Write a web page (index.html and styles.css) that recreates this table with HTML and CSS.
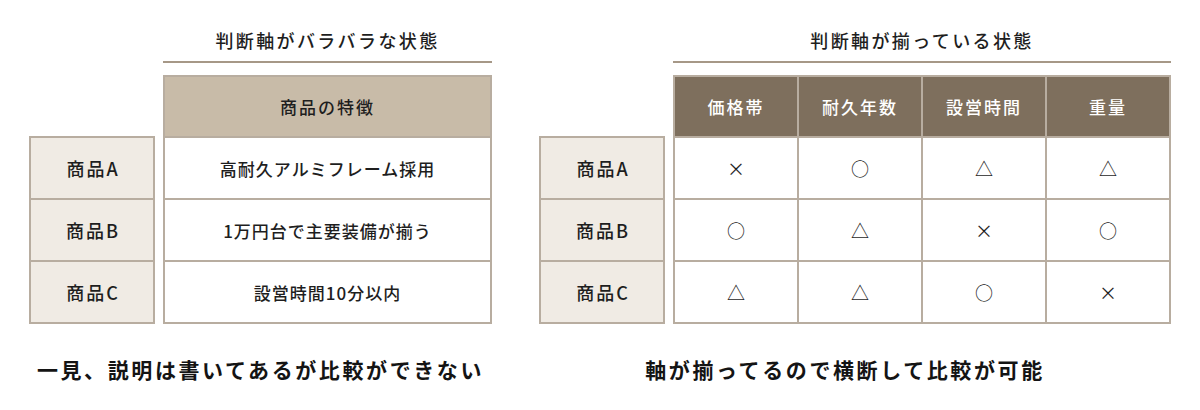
FILE: index.html
```html
<!DOCTYPE html>
<html lang="ja">
<head>
<meta charset="utf-8">
<title>判断軸の比較</title>
<link rel="stylesheet" href="styles.css">
</head>
<body>
<div class="page">
  <section class="panel panel-left">
    <div class="grid">
      <div class="spacer"></div>
      <div class="title">判断軸がバラバラな状態</div>
      <div class="labels">
        <div class="label">商品A</div>
        <div class="label">商品B</div>
        <div class="label">商品C</div>
      </div>
      <div class="table table-one">
        <div class="head head-light">商品の特徴</div>
        <div class="cell">高耐久アルミフレーム採用</div>
        <div class="cell">1万円台で主要装備が揃う</div>
        <div class="cell">設営時間10分以内</div>
      </div>
    </div>
    <p class="caption">一見、説明は書いてあるが比較ができない</p>
  </section>

  <section class="panel panel-right">
    <div class="grid">
      <div class="spacer"></div>
      <div class="title">判断軸が揃っている状態</div>
      <div class="labels">
        <div class="label">商品A</div>
        <div class="label">商品B</div>
        <div class="label">商品C</div>
      </div>
      <div class="table table-four">
        <div class="head head-dark">価格帯</div>
        <div class="head head-dark">耐久年数</div>
        <div class="head head-dark">設営時間</div>
        <div class="head head-dark">重量</div>
        <div class="cell mark">×</div>
        <div class="cell mark">○</div>
        <div class="cell mark">△</div>
        <div class="cell mark">△</div>
        <div class="cell mark">○</div>
        <div class="cell mark">△</div>
        <div class="cell mark">×</div>
        <div class="cell mark">○</div>
        <div class="cell mark">△</div>
        <div class="cell mark">△</div>
        <div class="cell mark">○</div>
        <div class="cell mark">×</div>
      </div>
    </div>
    <p class="caption caption-right">軸が揃ってるので横断して比較が可能</p>
  </section>
</div>
</body>
</html>
```

FILE: styles.css
```css
* { box-sizing: border-box; }

html, body {
  margin: 0;
  padding: 0;
  background: #ffffff;
}

body {
  font-family: "Noto Sans CJK JP", "Noto Sans", sans-serif;
  color: #1e1e1e;
}

.page {
  display: flex;
  gap: 47px;
  padding-left: 29px;
}

.panel {
  display: flex;
  flex-direction: column;
}

.grid {
  display: grid;
  column-gap: 8px;
  grid-template-rows: 63px auto;
  row-gap: 12px;
}

.panel-left .grid { grid-template-columns: 126px 329px; }
.panel-right .grid { grid-template-columns: 126px 498px; }

.title {
  border-bottom: 2px solid #a69887;
  text-align: center;
  font-size: 18px;
  font-weight: 500;
  letter-spacing: 2.4px;
  line-height: 22px;
  padding-top: 29px;
}

.labels {
  margin-top: 61px;
  display: flex;
  flex-direction: column;
  border-top: 2px solid #b8ada0;
  align-self: start;
}

.label {
  height: 62px;
  background: #f0ebe4;
  border: 2px solid #b8ada0;
  border-top: none;
  display: flex;
  align-items: center;
  justify-content: center;
  font-size: 18px;
  font-weight: 500;
  letter-spacing: 2px;
  padding-left: 2px;
}

.table {
  display: grid;
  border-top: 2px solid #b8ada0;
  border-left: 2px solid #b8ada0;
  align-self: start;
}

.table-one { grid-template-columns: 1fr; grid-template-rows: 61px repeat(3, 62px); }
.table-four { grid-template-columns: repeat(4, 1fr); grid-template-rows: 61px repeat(3, 62px); }

.head, .cell {
  border-right: 2px solid #b8ada0;
  border-bottom: 2px solid #b8ada0;
  display: flex;
  align-items: center;
  justify-content: center;
}

.head {
  font-size: 17px;
  font-weight: 500;
  letter-spacing: 2px;
}

.head-light { background: #c8bba8; color: #1e1e1e; }
.head-dark { background: #7e6f5d; color: #ffffff; }

.cell {
  background: #ffffff;
  font-size: 17px;
  font-weight: 500;
  letter-spacing: 1px;
}

.mark {
  font-size: 18px;
  font-weight: 400;
  letter-spacing: 0;
}

.caption {
  margin: 30px 0 0;
  text-align: center;
  font-size: 21px;
  font-weight: 700;
  line-height: 30px;
  letter-spacing: 2.6px;
  color: #141414;
}

.caption-right {
  padding-right: 20px;
}
```
